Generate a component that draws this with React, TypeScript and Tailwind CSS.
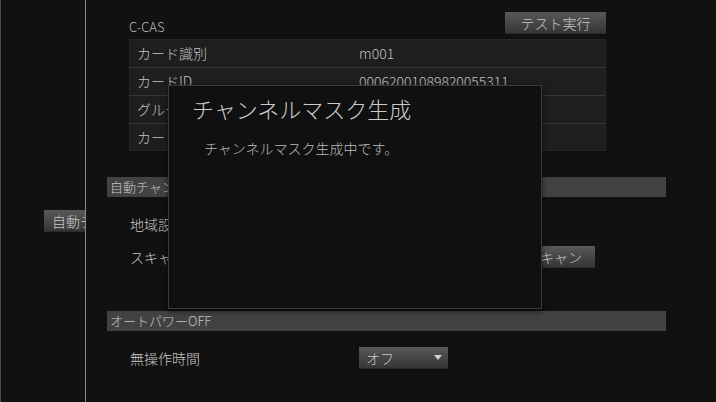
import React from 'react';

const font = { fontFamily: '"Noto Sans CJK JP", "Noto Sans", sans-serif' };

const btn =
  'h-[22px] bg-gradient-to-b from-[#585858] to-[#363636] text-[#c8c8c8] text-[14px] leading-[22px] border-b border-[#2a2a2a]';

interface CardRow {
  label: string;
  value: string;
}

const cardRows: CardRow[] = [
  { label: 'カード識別', value: 'm001' },
  { label: 'カードID', value: '00062001089820055311' },
  { label: 'グループID', value: '' },
  { label: 'カード状態', value: '' },
];

function SectionBar({ title }: { title: string }) {
  return (
    <div className="h-[20px] w-[559px] bg-[#424242] pl-[3px] text-[13px] leading-[20px] text-[#c4c4c4]">
      {title}
    </div>
  );
}

export default function App() {
  return (
    <div
      className="relative flex h-[402px] w-[716px] overflow-hidden bg-[#111111] text-[#c8c8c8] font-light"
      style={font}
    >
      {/* Sidebar */}
      <aside className="w-[86px] shrink-0 overflow-hidden border-l border-[#4a4a4a] border-r border-r-[#8a8a8a]">
        <div className="pt-[210px] pl-[43px]">
          <div className={`${btn} w-[120px] whitespace-nowrap px-[8px]`}>自動チャンネル設定</div>
        </div>
      </aside>

      {/* Main settings */}
      <main className="flex-1 pl-[21px]">
        {/* C-CAS */}
        <div className="pl-[22px] pt-[12px]">
          <div className="flex w-[477px] items-end justify-between">
            <span className="text-[13px] leading-[15px] text-[#bdbdbd]">C-CAS</span>
            <button className={`${btn} w-[101px] text-center`}>テスト実行</button>
          </div>
          <div className="mt-[5px] w-[477px] bg-[#1e1e1e] shadow-[inset_0_0_0_1px_#262626]">
            {cardRows.map((row, i) => (
              <div
                key={row.label}
                className={`flex h-[28px] items-center text-[14px] ${i > 0 ? 'border-t border-[#363636]' : ''}`}
              >
                <span className="w-[222px] pl-[8px] text-[#c4c4c4]">{row.label}</span>
                <span className="pl-[8px] text-[#c0c0c0]">{row.value}</span>
              </div>
            ))}
          </div>
        </div>

        {/* Auto channel */}
        <div className="mt-[26px]">
          <SectionBar title="自動チャンネル設定" />
          <div className="pl-[23px] text-[14px]">
            <div className="mt-[17px] flex h-[20px] items-center">
              <span className="w-[229px]">地域設定</span>
              <span>関東</span>
            </div>
            <div className="mt-[12px] flex h-[22px] items-center">
              <span className="w-[229px]">スキャン</span>
              <button className={`${btn} w-[236px] pr-[13px] text-right`}>再スキャン</button>
            </div>
          </div>
        </div>

        {/* Auto power off */}
        <div className="mt-[43px]">
          <SectionBar title="オートパワーOFF" />
          <div className="mt-[16px] flex h-[22px] items-center pl-[23px] text-[14px]">
            <span className="w-[229px]">無操作時間</span>
            <div className={`${btn} flex w-[89px] items-center justify-between pl-[7px] pr-[6px]`}>
              <span>オフ</span>
              <svg width="8" height="5" viewBox="0 0 8 5">
                <path d="M0 0 H8 L4 5 Z" fill="#d0d0d0" />
              </svg>
            </div>
          </div>
        </div>
      </main>

      {/* Modal */}
      <div className="absolute left-[168px] top-[85px] h-[224px] w-[374px] border border-[#3a3a3a] bg-[#101010] shadow-[0_2px_6px_rgba(0,0,0,0.6)]">
        <div className="pl-[23px] pt-[6px] text-[22px] leading-[32px] text-[#cccccc]">チャンネルマスク生成</div>
        <div className="pl-[35px] pt-[14px] text-[14px] leading-[20px] text-[#bcbcbc]">チャンネルマスク生成中です。</div>
      </div>
    </div>
  );
}
